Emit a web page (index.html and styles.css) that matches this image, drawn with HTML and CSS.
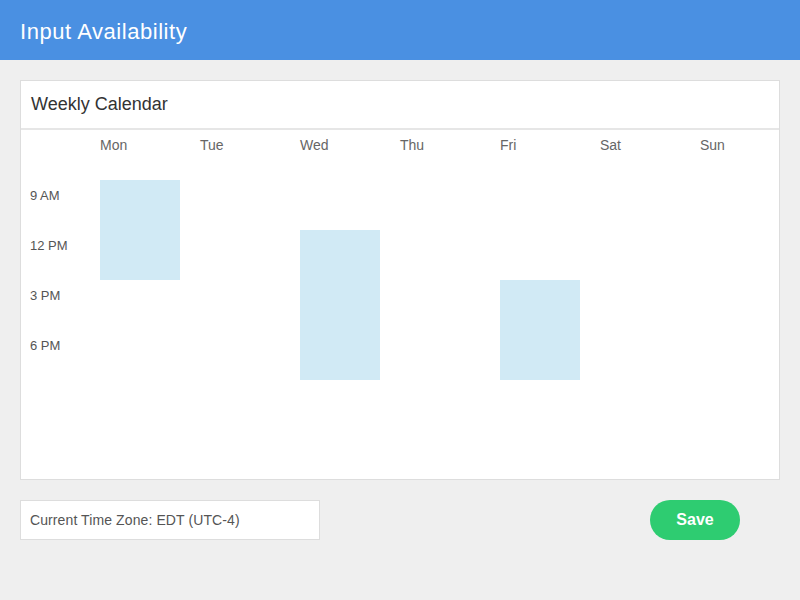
FILE: index.html
```html
<!DOCTYPE html>
<html>
<head>
<meta charset="utf-8">
<link rel="stylesheet" href="styles.css">
</head>
<body>
<header class="topbar">
  <h1 class="title">Input Availability</h1>
</header>
<main class="content">
  <section class="card">
    <div class="card-header">Weekly Calendar</div>
    <div class="calendar">
      <div class="day c2">Mon</div>
      <div class="day c3">Tue</div>
      <div class="day c4">Wed</div>
      <div class="day c5">Thu</div>
      <div class="day c6">Fri</div>
      <div class="day c7">Sat</div>
      <div class="day c8">Sun</div>
      <div class="time r2">9 AM</div>
      <div class="time r3">12 PM</div>
      <div class="time r4">3 PM</div>
      <div class="time r5">6 PM</div>
      <div class="slot mon"></div>
      <div class="slot wed"></div>
      <div class="slot fri"></div>
    </div>
  </section>
  <div class="footer">
    <div class="timezone">Current Time Zone: EDT (UTC-4)</div>
    <button class="save">Save</button>
  </div>
</main>
</body>
</html>
```
FILE: styles.css
```css
html, body {
  margin: 0;
  padding: 0;
}
body {
  background: #efefef;
  font-family: "Liberation Sans", Arial, Helvetica, sans-serif;
  width: 800px;
  height: 600px;
  overflow: hidden;
}
.topbar {
  background: #4a90e2;
  height: 60px;
  box-sizing: border-box;
  display: flex;
  align-items: center;
  padding: 4px 20px 0;
}
.title {
  margin: 0;
  color: #fff;
  font-size: 22px;
  font-weight: normal;
  letter-spacing: 0.55px;
}
.content {
  padding: 20px;
}
.card {
  background: #fff;
  border: 1px solid #dddddd;
  height: 398px;
  box-sizing: content-box;
}
.card-header {
  height: 47px;
  line-height: 46px;
  padding-left: 10px;
  font-size: 18px;
  color: #333;
  border-bottom: 2px solid #e6e6e6;
}
.calendar {
  display: grid;
  grid-template-columns: 50px repeat(7, 80px);
  grid-template-rows: repeat(7, 50px);
  column-gap: 20px;
  padding-left: 9px;
}
.day {
  grid-row: 1;
  font-size: 14px;
  color: #666;
  padding-top: 7px;
}
.c2 { grid-column: 2; }
.c3 { grid-column: 3; }
.c4 { grid-column: 4; }
.c5 { grid-column: 5; }
.c6 { grid-column: 6; }
.c7 { grid-column: 7; }
.c8 { grid-column: 8; }
.time {
  grid-column: 1;
  font-size: 13px;
  color: #555;
  padding-top: 8px;
}
.r2 { grid-row: 2; }
.r3 { grid-row: 3; }
.r4 { grid-row: 4; }
.r5 { grid-row: 5; }
.slot {
  background: #d1eaf5;
}
.mon { grid-column: 2; grid-row: 2 / 4; }
.wed { grid-column: 4; grid-row: 3 / 6; }
.fri { grid-column: 6; grid-row: 4 / 6; }
.footer {
  display: flex;
  align-items: center;
  justify-content: space-between;
  margin-top: 20px;
  padding-right: 40px;
}
.timezone {
  width: 289px;
  height: 38px;
  line-height: 38px;
  padding-left: 9px;
  background: #fff;
  border: 1px solid #dddddd;
  font-size: 14px;
  color: #555;
  letter-spacing: 0.1px;
}
.save {
  width: 90px;
  height: 40px;
  border: none;
  border-radius: 20px;
  background: #2ecc71;
  color: #fff;
  font-family: "Liberation Sans", Arial, sans-serif;
  font-size: 16px;
  font-weight: bold;
  padding: 0;
}
```
